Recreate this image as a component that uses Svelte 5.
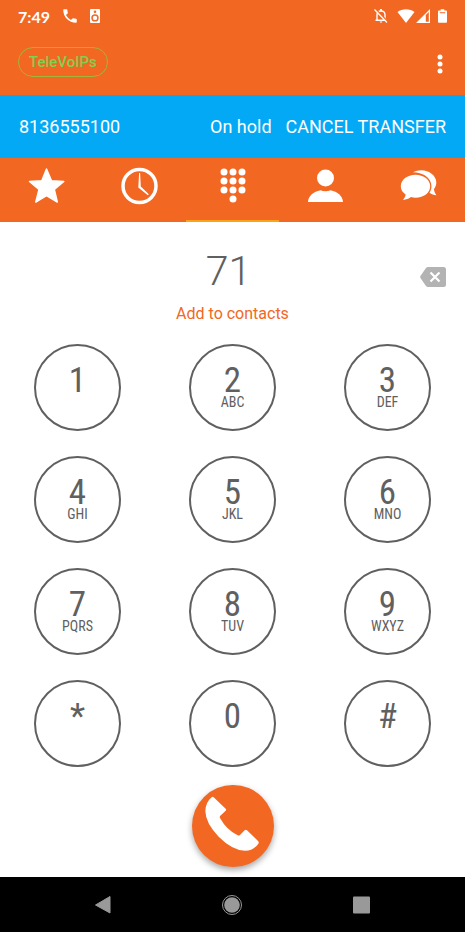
<!--
  Dialer screen

  Keypad tab of the phone app, with the transfer banner shown
  while another call is on hold.
-->

<script lang="ts">
  interface Key {
    digit: string;
    letters?: string;
  }

  const keys: Key[] = [
    { digit: '1' },
    { digit: '2', letters: 'ABC' },
    { digit: '3', letters: 'DEF' },
    { digit: '4', letters: 'GHI' },
    { digit: '5', letters: 'JKL' },
    { digit: '6', letters: 'MNO' },
    { digit: '7', letters: 'PQRS' },
    { digit: '8', letters: 'TUV' },
    { digit: '9', letters: 'WXYZ' },
    { digit: '*' },
    { digit: '0' },
    { digit: '#' },
  ];

  const tabs = ['Favorites', 'Recents', 'Keypad', 'Contacts', 'Messages'];
  const dots = [
    [5, 5], [14, 5], [23, 5],
    [5, 14], [14, 14], [23, 14],
    [5, 23], [14, 23], [23, 23],
    [14, 32],
  ];

  let number = $state('71');
  let activeTab = $state('Keypad');
</script>

<div class="screen">
  <header>
    <div class="status">
      <span class="time">7:49</span>
      <svg class="status-call" width="18" height="18" viewBox="0 0 24 24" aria-hidden="true">
        <path d="M20 15.5c-1.25 0-2.45-.2-3.57-.57a1 1 0 0 0-1.02.24l-2.2 2.2a15.05 15.05 0 0 1-6.59-6.58l2.2-2.21a.96.96 0 0 0 .25-1A11.4 11.4 0 0 1 8.5 4a1 1 0 0 0-1-1H4a1 1 0 0 0-1 1c0 9.39 7.61 17 17 17a1 1 0 0 0 1-1v-3.5a1 1 0 0 0-1-1z" />
      </svg>
      <svg class="status-speaker" width="10" height="14" viewBox="0 0 10 14" aria-hidden="true">
        <path fill-rule="evenodd" d="M1 0h8a1 1 0 0 1 1 1v12a1 1 0 0 1-1 1H1a1 1 0 0 1-1-1V1a1 1 0 0 1 1-1zM5 1.500a1.300 1.300 0 1 0 0 2.600 1.300 1.300 0 0 0 0-2.600zM5 5.200a3.700 3.700 0 1 0 0 7.400 3.700 3.700 0 0 0 0-7.400z" />
        <circle cx="5" cy="8.9" r="2.2" />
      </svg>
      <div class="status-end">
        <svg width="16" height="16" viewBox="0 0 16 16" aria-hidden="true">
          <path d="M4 12V7c0-2.400 1.500-4 4-4s4 1.600 4 4v5M2.500 12.200h11" fill="none" stroke="#fff" stroke-width="1.400" />
          <path d="M7 1h2v2H7zM6.500 13.500h3L8 15z" />
          <path d="M2.500 1l12.500 13" stroke="#f26722" stroke-width="1.500" />
          <path d="M1.500 1.500l12.500 13" stroke="#fff" stroke-width="1.300" />
        </svg>
        <svg class="wifi" width="18" height="14" viewBox="0 0 18 14" aria-hidden="true">
          <path d="M0.500 3C5-.8 13-.8 17.500 3L9 14z" />
        </svg>
        <svg class="signal" width="14" height="14" viewBox="0 0 14 14" aria-hidden="true">
          <path fill-rule="evenodd" d="M14 0v14H0zM12.800 3L9.800 6v6.800h3z" />
        </svg>
        <svg class="battery" width="9" height="14" viewBox="0 0 10 15" aria-hidden="true">
          <path fill-rule="evenodd" d="M3 0h4v1.500h2a1 1 0 0 1 1 1V14a1 1 0 0 1-1 1H1a1 1 0 0 1-1-1V2.500a1 1 0 0 1 1-1h2zM2 3.200v1.300h6V3.200z" />
        </svg>
      </div>
    </div>
    <div class="toolbar">
      <span class="brand">TeleVoIPs</span>
      <button class="more" aria-label="More options">
        <svg width="6" height="20" viewBox="0 0 6 20">
          <circle cx="3" cy="3" r="2.500" />
          <circle cx="3" cy="10" r="2.500" />
          <circle cx="3" cy="17" r="2.500" />
        </svg>
      </button>
    </div>
  </header>

  <section class="banner">
    <span class="held">8136555100</span>
    <span>On hold</span>
    <button>CANCEL TRANSFER</button>
  </section>

  <nav class="tabs">
    {#each tabs as tab}
      <button class:active={tab === activeTab} aria-label={tab} onclick={() => (activeTab = tab)}>
        {#if tab === 'Favorites'}
          <svg width="38" height="38" viewBox="0 0 38 38">
            <path d="M18.500 2l5 11.700 12.300.8-9.500 8 3 12.500-10.800-6.500L7.800 35l3.200-12.500-9.500-8 12.300-.8z" stroke="#fff" stroke-width="1.500" stroke-linejoin="round" />
          </svg>
        {:else if tab === 'Recents'}
          <svg width="38" height="38" viewBox="0 0 38 38">
            <circle cx="18.500" cy="19" r="16.500" fill="none" stroke="#fff" stroke-width="3.500" />
            <path d="M18.100 6h1l.7 13.400 8 7.800-1 1-9.500-7.800z" />
          </svg>
        {:else if tab === 'Keypad'}
          <svg width="28" height="38" viewBox="0 0 28 38">
            {#each dots as [x, y]}
              <circle cx={x} cy={y} r="3.500" />
            {/each}
          </svg>
        {:else if tab === 'Contacts'}
          <svg width="38" height="38" viewBox="0 0 38 38">
            <circle cx="18.500" cy="11" r="8.500" />
            <path d="M1 35c.3-6.200 5.500-10.500 12.500-11.800 3 1.300 7 1.300 10 0C30.500 24.500 35.700 28.800 36 35z" />
          </svg>
        {:else}
          <svg width="38" height="38" viewBox="0 0 38 38">
            <path d="M13 5.300C17 3 22.500 2.500 27 4.200c8.500 2.800 12 11.300 7 17.800.2 2.500.9 4.300 2.500 6.300-2.700-.2-5-1-7-2.500 3.700-6 2-13-4-17C22 6.500 17.500 5.300 13 5.300z" />
            <path d="M15.500 7.800c8.300 0 14.700 5 14.700 11.500s-6.400 11.400-14.700 11.400c-1.600 0-3.200-.2-4.600-.6-2.200 1.700-4.600 2.700-8 2.800 1.700-1.700 2.500-3.200 2.700-5.300-3-2-4.800-5-4.800-8.300C.8 12.800 7.200 7.800 15.500 7.800z" />
          </svg>
        {/if}
      </button>
    {/each}
  </nav>

  <main>
    <div class="entry">
      <input type="tel" aria-label="Phone number" bind:value={number} />
      <button class="erase" aria-label="Backspace" onclick={() => (number = number.slice(0, -1))}>
        <svg width="26" height="20" viewBox="0 0 26 20">
          <path d="M8 0h15.500A2.500 2.500 0 0 1 26 2.500v15a2.500 2.500 0 0 1-2.500 2.500H8a2.500 2.500 0 0 1-2-1L.6 11.200a2 2 0 0 1 0-2.400L6 1a2.500 2.500 0 0 1 2-1z" fill="#b3b3b3" />
          <path d="M10.500 5.500l9 9M19.500 5.500l-9 9" stroke="#fff" stroke-width="2.200" />
        </svg>
      </button>
    </div>
    <button class="add">Add to contacts</button>

    <div class="keypad">
      {#each keys as key}
        <button class="key" onclick={() => (number += key.digit)}>
          <span class="digit">{key.digit}</span>
          {#if key.letters}
            <span class="letters">{key.letters}</span>
          {/if}
        </button>
      {/each}
    </div>

    <button class="call" aria-label="Call">
      <svg width="82" height="82" viewBox="0 0 246 246">
        <path d="M59 37q3-3 6 0l36 34q3 3 0 6l-16 15q-3 3-1 7 20 36 53 52 4 2 7-1l14-14q3-3 7 0l33 32q4 4 1 8-14 21-40 21-38-1-79-42Q41 115 40 79q0-26 19-42z" />
      </svg>
    </button>
  </main>

  <footer>
    <button aria-label="Back">
      <svg width="22" height="22" viewBox="0 0 22 22">
        <path d="M18 2.500v16.500L3.500 11z" stroke="#999" stroke-linejoin="round" />
      </svg>
    </button>
    <button aria-label="Home">
      <svg width="22" height="22" viewBox="0 0 22 22">
        <circle cx="11" cy="11" r="9.500" fill="none" stroke="#999" />
        <circle cx="11" cy="11" r="7.800" />
      </svg>
    </button>
    <button aria-label="Overview">
      <svg width="22" height="22" viewBox="0 0 22 22">
        <rect x="2" y="2.500" width="17" height="17" rx="1" />
      </svg>
    </button>
  </footer>
</div>

<style>
  :global(body) {
    margin: 0;
    background: #fff;
  }

  .screen {
    display: flex;
    flex-direction: column;
    min-height: 100vh;
    font-family: Roboto, sans-serif;
    color: #fff;
  }

  button {
    padding: 0;
    border: 0;
    background: none;
    color: inherit;
    font: inherit;
    cursor: pointer;
  }

  svg {
    display: block;
    fill: #fff;
  }

  /* Header */
  header {
    background: #f26722;
  }

  .status {
    display: flex;
    align-items: center;
    height: 32px;
    padding: 0 18px;
  }

  .time {
    font-family: Lato, sans-serif;
    font-size: 16px;
    font-weight: 700;
  }

  .status-call {
    margin-left: 11px;
  }

  .status-speaker {
    margin-left: 11px;
  }

  .status-end {
    display: flex;
    align-items: center;
    margin-left: auto;
  }

  .wifi {
    margin-left: 8px;
  }

  .signal {
    margin-left: 1px;
  }

  .battery {
    margin-left: 8px;
  }

  .toolbar {
    display: flex;
    align-items: center;
    justify-content: space-between;
    height: 63px;
    padding: 0 18px;
  }

  .brand {
    margin-bottom: 4px;
    padding: 0 10px;
    border: 1px solid #a2b53c;
    border-radius: 15px;
    color: #82cf52;
    font-size: 15px;
    font-weight: 500;
    line-height: 28px;
  }

  .more {
    padding: 0 4px;
  }

  /* Transfer banner */
  .banner {
    display: flex;
    align-items: center;
    gap: 14px;
    padding: 1px 19px 0;
    background: #04a9f5;
    font-size: 18px;
    line-height: 62px;
  }

  .held {
    margin-right: auto;
  }

  /* Tabs */
  .tabs {
    display: flex;
    height: 64px;
    background: #f26722;
  }

  .tabs button {
    display: flex;
    flex: 1;
    justify-content: center;
    padding-top: 9px;
    border-bottom: 2px solid transparent;
  }

  .tabs .active {
    border-color: #fba41a;
  }

  /* Number entry */
  main {
    display: flex;
    flex-direction: column;
    align-items: center;
    background: #fff;
    color: #606060;
  }

  .entry {
    display: flex;
    align-items: center;
    align-self: stretch;
    margin-top: 24px;
    padding: 0 19px;
  }

  input {
    flex: 1;
    min-width: 0;
    padding: 0 0 0 18px;
    border: 0;
    outline: 0;
    background: none;
    color: inherit;
    font-family: inherit;
    font-size: 41px;
    font-weight: 300;
    line-height: 50px;
    text-align: center;
  }

  .erase {
    margin-top: 12px;
  }

  .add {
    margin-top: 8px;
    color: #f26722;
    font-size: 16px;
    line-height: 20px;
  }

  /* Keypad */
  .keypad {
    display: grid;
    grid-template-columns: repeat(3, 1fr);
    align-self: stretch;
    justify-items: center;
    row-gap: 25px;
    margin-top: 20px;
  }

  .key {
    display: flex;
    flex-direction: column;
    align-items: center;
    width: 87px;
    height: 87px;
    padding-top: 20px;
    border: 2px solid #606060;
    border-radius: 50%;
    font-family: 'Roboto Condensed', 'Liberation Sans Narrow', Roboto, sans-serif;
  }

  .digit {
    font-size: 35px;
    line-height: 30px;
  }

  .letters {
    font-size: 14px;
    line-height: 12px;
  }

  .call {
    margin: 18px 0 10px;
    border-radius: 50%;
    background: #f26722;
    box-shadow: 0 3px 6px rgba(0, 0, 0, 0.35);
  }

  /* System navigation */
  footer {
    display: flex;
    flex: 1;
    align-items: center;
    justify-content: space-around;
    min-height: 54px;
    padding: 0 38px;
    background: #000;
  }

  footer svg {
    fill: #999;
  }
</style>
